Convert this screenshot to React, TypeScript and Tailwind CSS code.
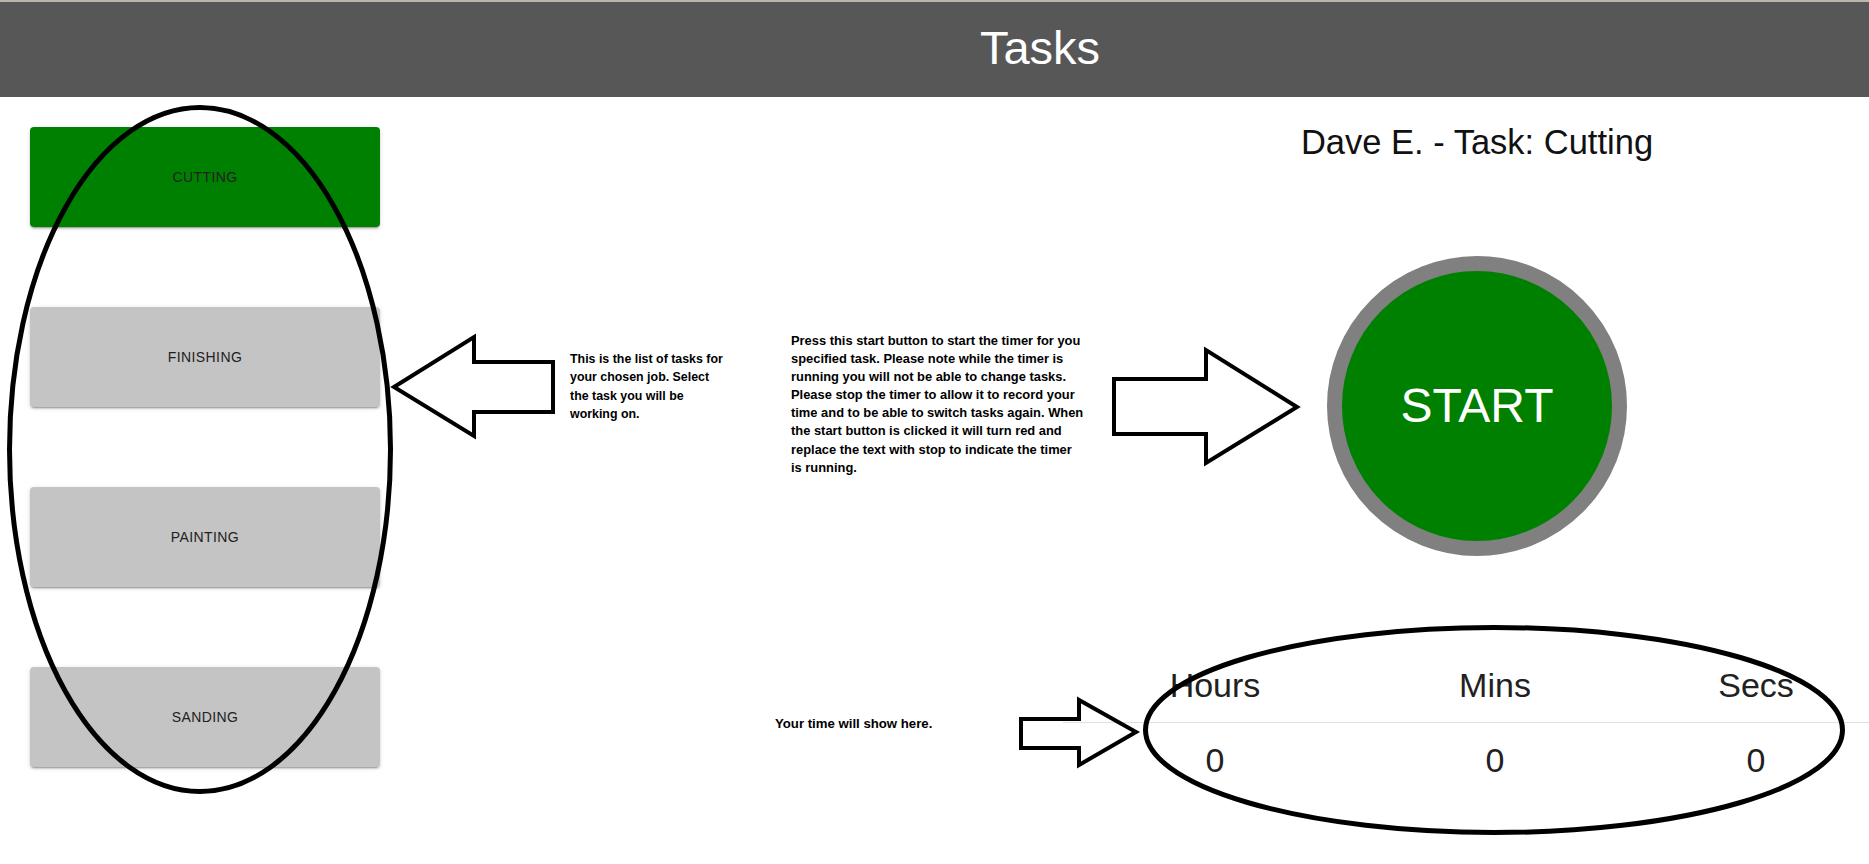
import React from "react";

const tasks = [
  { name: "Cutting", active: true },
  { name: "Finishing", active: false },
  { name: "Painting", active: false },
  { name: "Sanding", active: false },
];

function Annotations() {
  return (
    <>
      <svg
        className="absolute inset-0 pointer-events-none"
        width={1869}
        height={864}
        viewBox="0 0 1869 864"
      >
        <g fill="none" stroke="#000" strokeLinejoin="miter">
          <ellipse cx={200} cy={449.5} rx={190.5} ry={342} strokeWidth={5} />
          <ellipse cx={1494} cy={730} rx={348.5} ry={102.5} strokeWidth={5} />
          <polygon
            points="394,387 474,337 474,362 553,362 553,412 474,412 474,436"
            strokeWidth={4}
          />
          <polygon
            points="1114,379 1206,379 1206,350 1297,407 1206,463 1206,434 1114,434"
            strokeWidth={4}
          />
          <polygon
            points="1021,719 1079,719 1079,700 1136,732 1079,765 1079,748 1021,748"
            strokeWidth={4}
          />
        </g>
      </svg>
      <div className="absolute left-[570px] top-[350px] whitespace-nowrap text-[12.4px] leading-[18.3px] font-bold text-black">
        This is the list of tasks for
        <br />
        your chosen job. Select
        <br />
        the task you will be
        <br />
        working on.
      </div>
      <div className="absolute left-[791px] top-[332px] whitespace-nowrap text-[12.9px] leading-[18.1px] font-bold text-black">
        Press this start button to start the timer for you
        <br />
        specified task. Please note while the timer is
        <br />
        running you will not be able to change tasks.
        <br />
        Please stop the timer to allow it to record your
        <br />
        time and to be able to switch tasks again. When
        <br />
        the start button is clicked it will turn red and
        <br />
        replace the text with stop to indicate the timer
        <br />
        is running.
      </div>
      <div className="absolute left-[775px] top-[715px] whitespace-nowrap text-[13.2px] leading-[18px] font-bold text-black">
        Your time will show here.
      </div>
    </>
  );
}

export default function App() {
  return (
    <div className="relative w-full h-[864px] overflow-hidden bg-white font-['Liberation_Sans',Arial,sans-serif]">
      <header className="h-[97px] flex flex-col">
        <div className="h-[2px] bg-[#bdb6ad]" />
        <div className="flex-1 bg-[#575757] flex items-center justify-center pl-[211px] pb-[4px]">
          <h1 className="text-[47px] leading-none text-white font-normal">Tasks</h1>
        </div>
      </header>

      <div className="flex">
        <div className="w-[410px] shrink-0 flex flex-col gap-[80px] pt-[30px] pl-[30px]">
          {tasks.map((t) => (
            <button
              key={t.name}
              className={
                "h-[100px] w-[350px] rounded-[4px] flex items-center justify-center text-[14px] tracking-[0.4px] uppercase text-[#212121] shadow-[0px_3px_1px_-2px_rgba(0,0,0,0.2),0px_2px_2px_0px_rgba(0,0,0,0.14),0px_1px_5px_0px_rgba(0,0,0,0.12)] " +
                (t.active ? "bg-[#008000]" : "bg-[#c4c4c4]")
              }
            >
              {t.name}
            </button>
          ))}
        </div>

        <div className="flex-1 flex flex-col items-end">
          <div className="w-[784px] flex flex-col items-center pt-[24px]">
            <h4 className="text-[34.5px] leading-[42px] text-[#111] font-normal">
              Dave E. - Task: Cutting
            </h4>
            <button className="mt-[93px] w-[300px] h-[300px] rounded-full border-[15px] border-[#808080] bg-[#008000] text-white text-[48px] flex items-center justify-center">
              START
            </button>
          </div>

          <div className="w-[806px] mt-[92px] grid grid-cols-[304px_256px_1fr] text-[34px] leading-[42px] text-[#212121]">
            <div className="py-[16px] border-b border-[#e0e0e0] text-center">Hours</div>
            <div className="py-[16px] border-b border-[#e0e0e0] text-center">Mins</div>
            <div className="py-[16px] pl-[20px] border-b border-[#e0e0e0] text-center">Secs</div>
            <div className="py-[16px] text-center">0</div>
            <div className="py-[16px] text-center">0</div>
            <div className="py-[16px] pl-[20px] text-center">0</div>
          </div>
        </div>
      </div>

      <Annotations />
    </div>
  );
}
